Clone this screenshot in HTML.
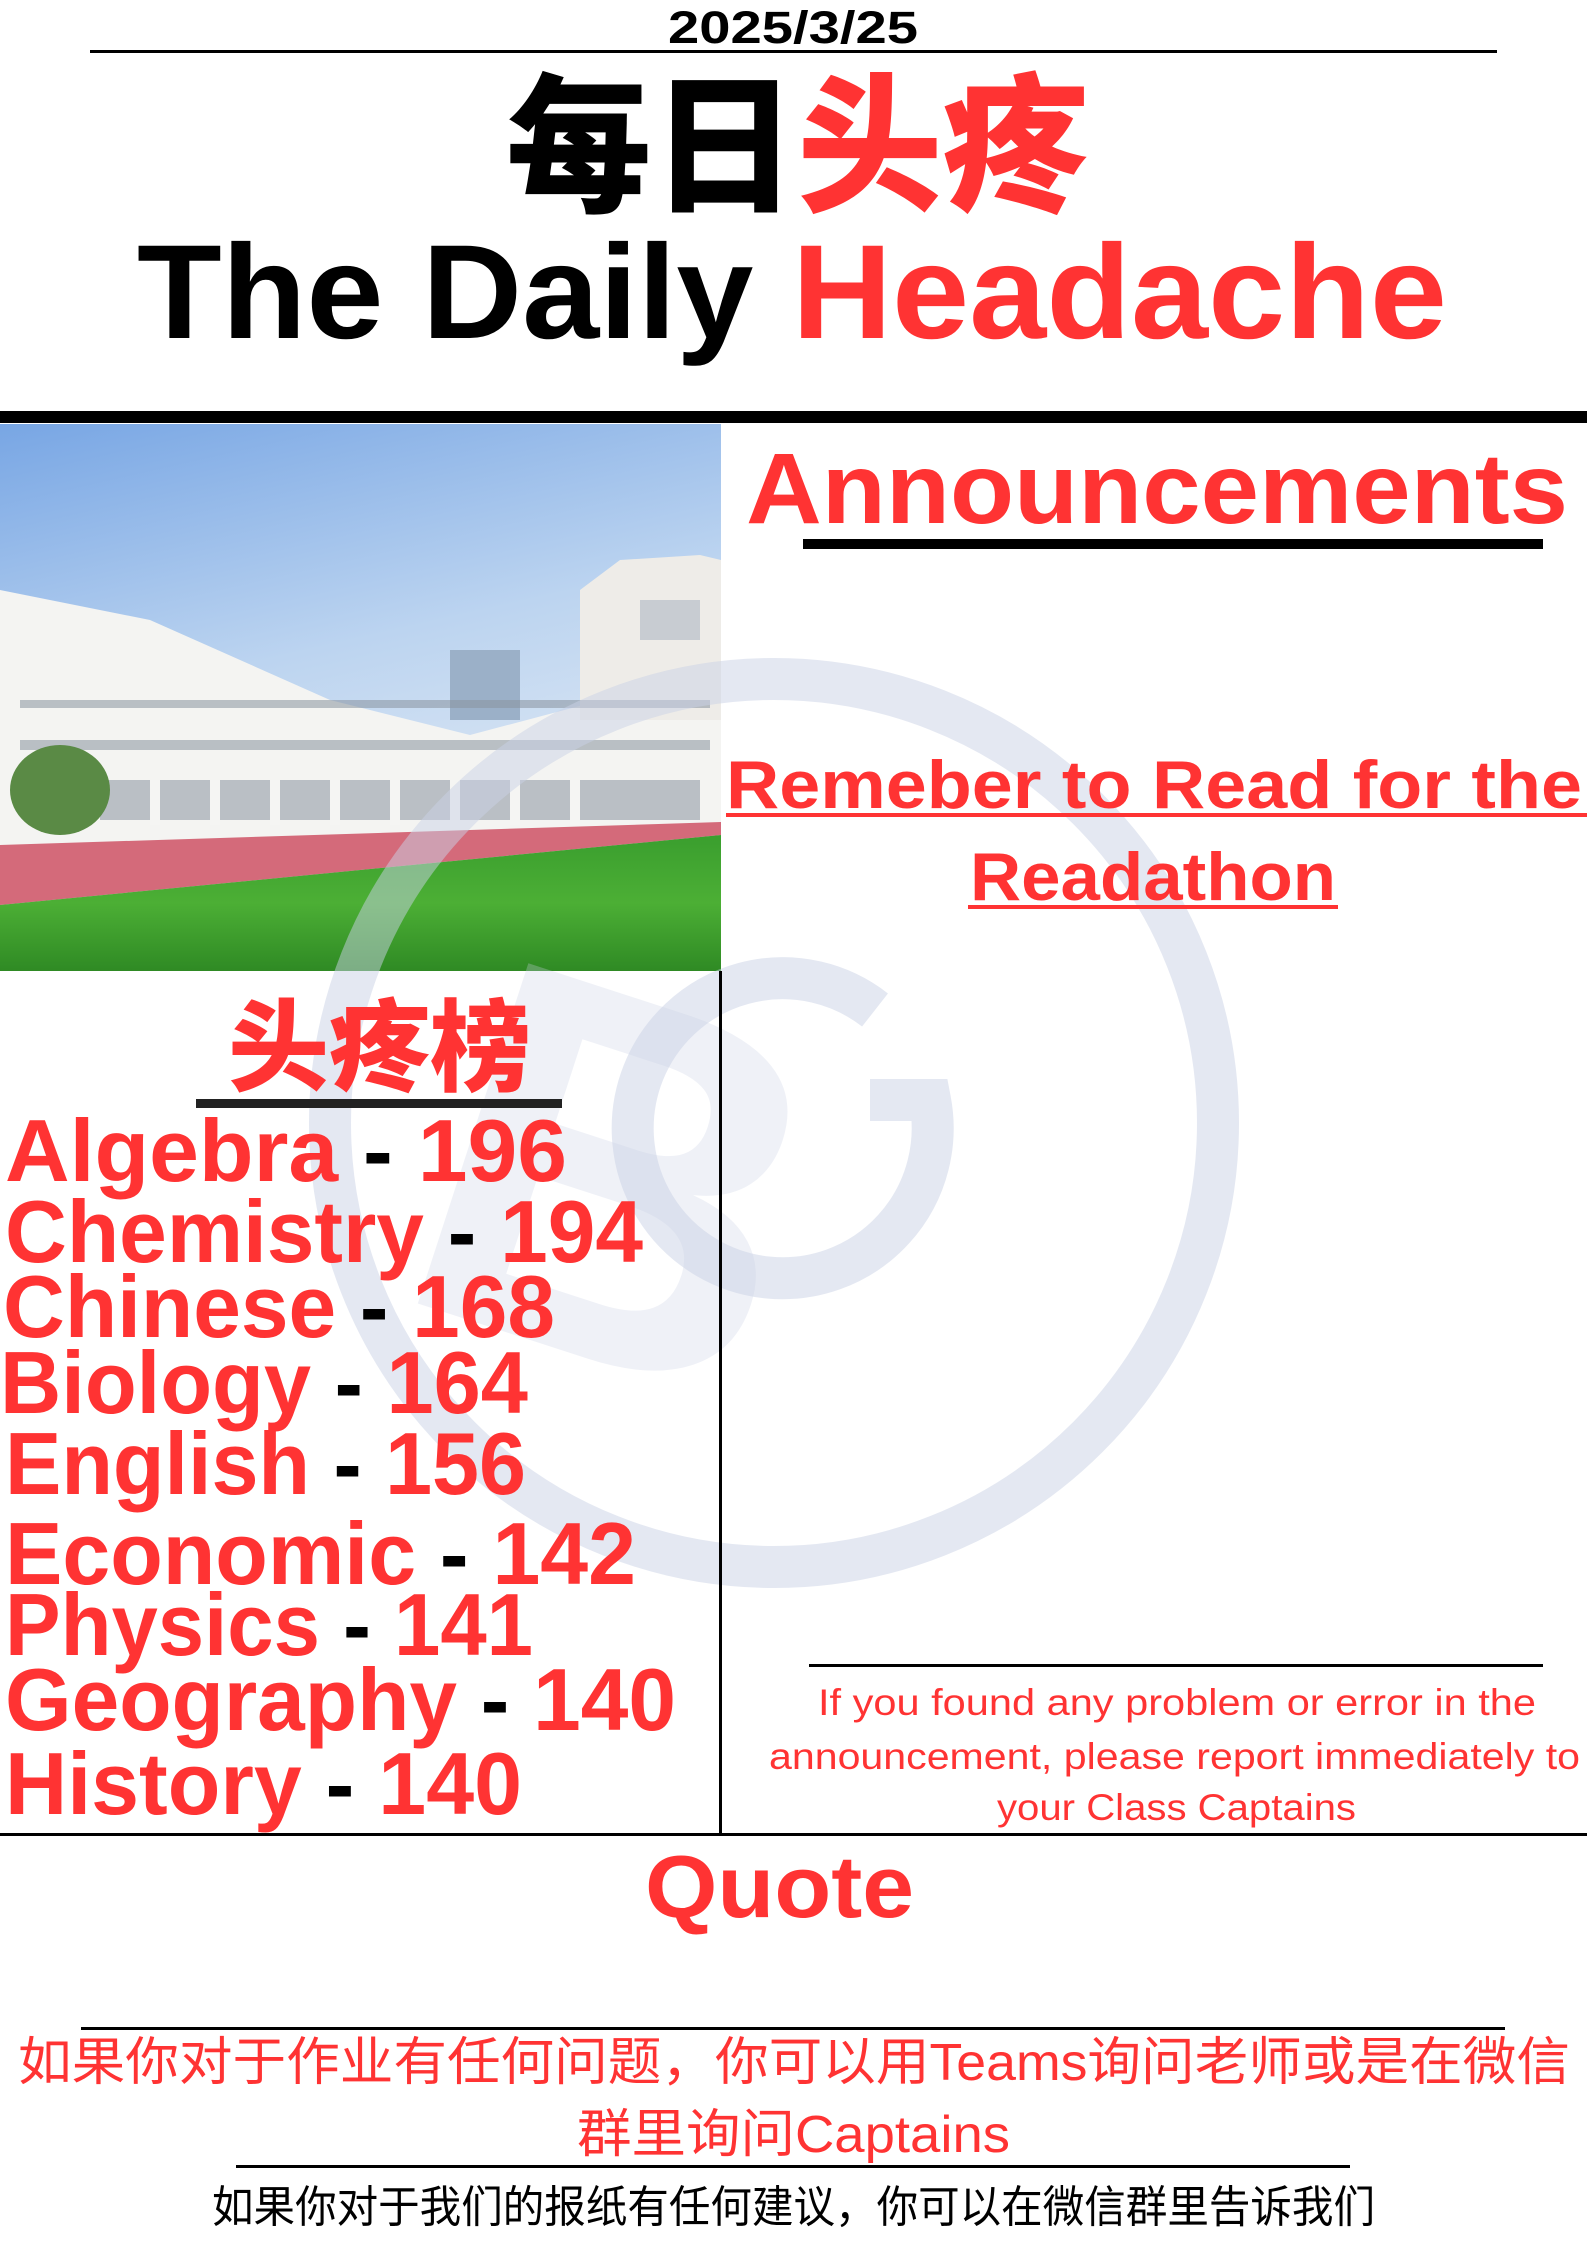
<!DOCTYPE html>
<html><head><meta charset="utf-8"><style>
html,body{margin:0;padding:0;background:#fff;width:1587px;height:2245px;overflow:hidden}
svg{display:block}
</style></head><body>
<svg width="1587" height="2245" viewBox="0 0 1587 2245" xmlns="http://www.w3.org/2000/svg">
<defs>
<linearGradient id="sky" x1="0" y1="0" x2="0.3" y2="1">
<stop offset="0" stop-color="#78a6e4"/><stop offset="0.5" stop-color="#bcd4f0"/><stop offset="1" stop-color="#e8eef5"/>
</linearGradient>
<linearGradient id="grass" x1="0" y1="0" x2="0" y2="1">
<stop offset="0" stop-color="#3a9e2e"/><stop offset="0.5" stop-color="#4caf35"/><stop offset="1" stop-color="#2f8a24"/>
</linearGradient>
</defs>
<!-- photo -->
<rect x="0" y="424" width="721" height="547" fill="url(#sky)"/>
<polygon points="0,590 150,620 330,700 470,735 640,690 721,680 721,830 0,880" fill="#f4f4f2"/>
<polygon points="580,590 620,560 700,555 721,560 721,720 580,720" fill="#eeece8"/>
<rect x="640" y="600" width="60" height="40" fill="#c8ccd2"/>
<rect x="450" y="650" width="70" height="70" fill="#9bb0c8"/>
<g fill="#8a94a0" opacity="0.55">
<rect x="20" y="700" width="690" height="8"/>
<rect x="20" y="740" width="690" height="10"/>
<rect x="100" y="780" width="600" height="40"/>
</g>
<g fill="#f5f5f3">
<rect x="150" y="780" width="10" height="45"/><rect x="210" y="780" width="10" height="45"/><rect x="270" y="780" width="10" height="45"/><rect x="330" y="780" width="10" height="45"/><rect x="390" y="780" width="10" height="45"/><rect x="450" y="780" width="10" height="45"/><rect x="510" y="780" width="10" height="45"/><rect x="570" y="780" width="10" height="45"/>
</g>
<ellipse cx="60" cy="790" rx="50" ry="45" fill="#5a8a45"/>
<polygon points="0,845 721,822 721,835 0,905" fill="#d46a7a"/>
<polygon points="0,905 721,835 721,971 0,971" fill="url(#grass)"/>
<!-- watermark -->
<g fill="none" stroke="#c9d2e6" stroke-opacity="0.5" stroke-width="42">
<circle cx="774" cy="1123" r="444"/>
<path d="M875 1010 A150 150 0 1 0 930 1100 L870 1100"/>
</g>
<text x="420" y="1330" font-family="Liberation Sans,sans-serif" font-weight="bold" font-size="520" fill="#c9d2e6" fill-opacity="0.3" transform="rotate(18 520 1200)">B</text>
<!-- date -->
<text x="793" y="43" text-anchor="middle" font-family="Liberation Sans,sans-serif" font-weight="bold" font-size="45" textLength="250" lengthAdjust="spacingAndGlyphs">2025/3/25</text>
<rect x="90" y="50" width="1407" height="3" fill="#000"/>
<!-- title -->
<text x="506" y="200" font-family="'Noto Sans CJK SC',sans-serif" font-weight="900" font-size="150" textLength="582" lengthAdjust="spacingAndGlyphs"><tspan fill="#000">每日</tspan><tspan fill="#ff3333">头疼</tspan></text>
<text x="137" y="338" font-family="Liberation Sans,sans-serif" font-weight="bold" font-size="134" textLength="1310" lengthAdjust="spacingAndGlyphs"><tspan fill="#000">The Daily </tspan><tspan fill="#ff3333">Headache</tspan></text>
<rect x="0" y="411" width="1587" height="12" fill="#000"/>
<!-- announcements -->
<text x="746" y="523" font-family="Liberation Sans,sans-serif" font-weight="bold" font-size="100" fill="#ff3333" textLength="822" lengthAdjust="spacingAndGlyphs">Announcements</text>
<rect x="803" y="539" width="740" height="10" fill="#000"/>
<g font-family="Liberation Sans,sans-serif" font-weight="bold" font-size="68" fill="#ff3333">
<text x="726" y="808" textLength="856" lengthAdjust="spacingAndGlyphs">Remeber to Read for the</text>
<text x="970" y="900" textLength="366" lengthAdjust="spacingAndGlyphs">Readathon</text>
</g>
<rect x="726" y="813" width="861" height="4" fill="#ff3333"/>
<rect x="968" y="905" width="370" height="4" fill="#ff3333"/>
<!-- vertical divider -->
<rect x="719" y="971" width="3" height="865" fill="#000"/>
<!-- ranking -->
<text x="228" y="1083" font-family="'Noto Sans CJK SC',sans-serif" font-weight="900" font-size="100" fill="#ff3333" textLength="303" lengthAdjust="spacingAndGlyphs">头疼榜</text>
<rect x="196" y="1099" width="366" height="9" fill="#222"/>
<g font-family="Liberation Sans,sans-serif" font-weight="bold" font-size="88" fill="#ff3333">
<text x="5" y="1181" textLength="562" lengthAdjust="spacingAndGlyphs">Algebra <tspan fill="#000">-</tspan> 196</text>
<text x="5" y="1262" textLength="638" lengthAdjust="spacingAndGlyphs">Chemistry <tspan fill="#000">-</tspan> 194</text>
<text x="3" y="1337" textLength="552" lengthAdjust="spacingAndGlyphs">Chinese <tspan fill="#000">-</tspan> 168</text>
<text x="0" y="1413" textLength="528" lengthAdjust="spacingAndGlyphs">Biology <tspan fill="#000">-</tspan> 164</text>
<text x="5" y="1494" textLength="521" lengthAdjust="spacingAndGlyphs">English <tspan fill="#000">-</tspan> 156</text>
<text x="5" y="1584" textLength="631" lengthAdjust="spacingAndGlyphs">Economic <tspan fill="#000">-</tspan> 142</text>
<text x="5" y="1655" textLength="528" lengthAdjust="spacingAndGlyphs">Physics <tspan fill="#000">-</tspan> 141</text>
<text x="5" y="1730" textLength="671" lengthAdjust="spacingAndGlyphs">Geography <tspan fill="#000">-</tspan> 140</text>
<text x="5" y="1814" textLength="517" lengthAdjust="spacingAndGlyphs">History <tspan fill="#000">-</tspan> 140</text>
</g>
<!-- note -->
<rect x="809" y="1664" width="734" height="3" fill="#000"/>
<g font-family="Liberation Sans,sans-serif" font-size="37" fill="#ff3333">
<text x="818" y="1715" textLength="718" lengthAdjust="spacingAndGlyphs">If you found any problem or error in the</text>
<text x="769" y="1769" textLength="811" lengthAdjust="spacingAndGlyphs">announcement, please report immediately to</text>
<text x="997" y="1820" textLength="359" lengthAdjust="spacingAndGlyphs">your Class Captains</text>
</g>
<rect x="0" y="1833" width="1587" height="3" fill="#000"/>
<!-- quote -->
<text x="645" y="1917" font-family="Liberation Sans,sans-serif" font-weight="bold" font-size="88" fill="#ff3333" textLength="269" lengthAdjust="spacingAndGlyphs">Quote</text>
<rect x="81" y="2027" width="1424" height="3" fill="#000"/>
<g font-family="'Liberation Sans','Noto Sans CJK SC',sans-serif" fill="#ff3333" font-size="52">
<text x="18" y="2080" textLength="1552" lengthAdjust="spacingAndGlyphs">如果你对于作业有任何问题，你可以用Teams询问老师或是在微信</text>
<text x="577" y="2152" textLength="433" lengthAdjust="spacingAndGlyphs">群里询问Captains</text>
</g>
<rect x="236" y="2165" width="1114" height="3" fill="#000"/>
<text x="212" y="2222" font-family="'Liberation Sans','Noto Sans CJK SC',sans-serif" font-size="44" fill="#000" textLength="1163" lengthAdjust="spacingAndGlyphs">如果你对于我们的报纸有任何建议，你可以在微信群里告诉我们</text>
</svg>
</body></html>
